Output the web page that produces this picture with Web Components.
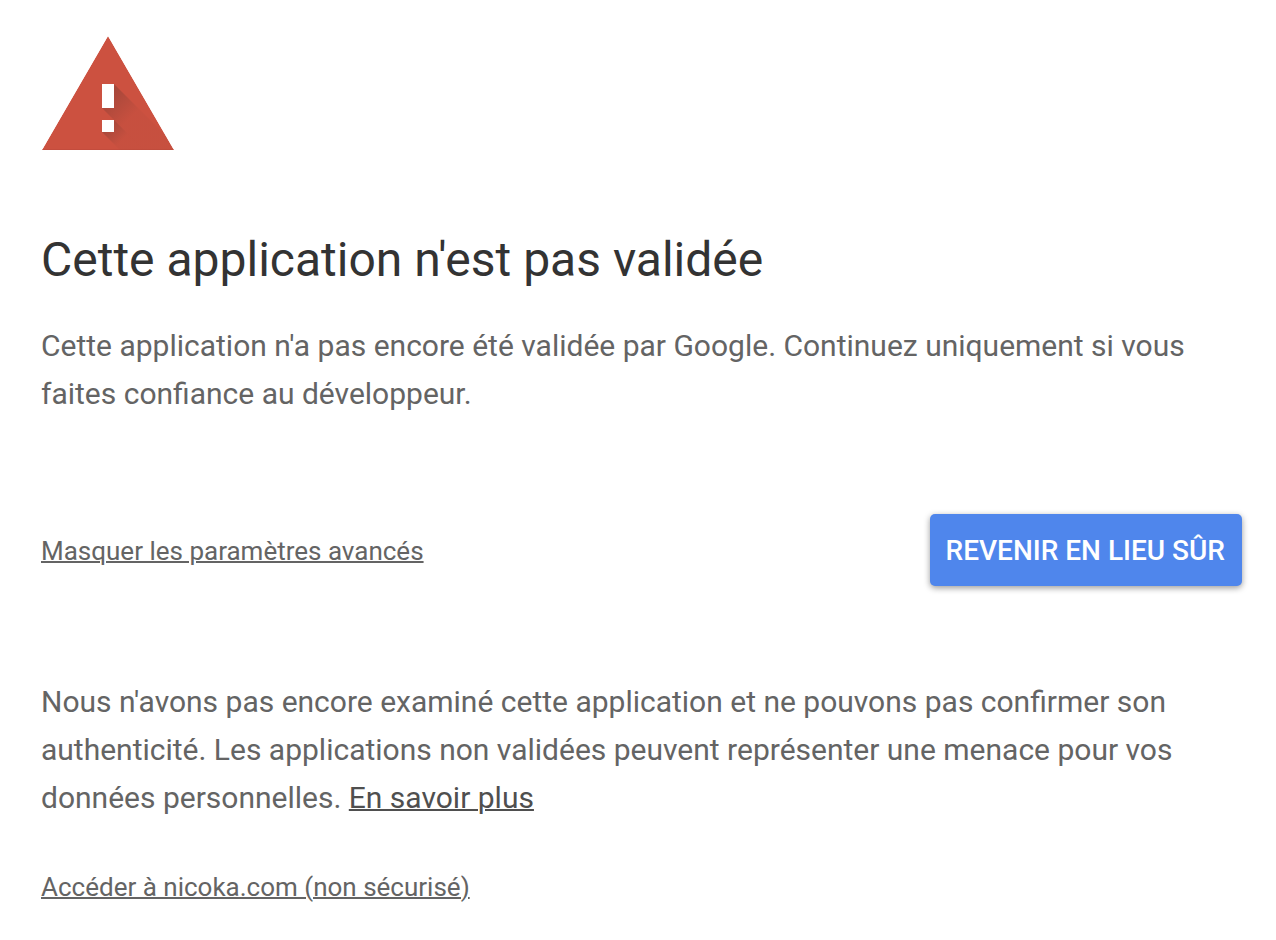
<!DOCTYPE html>
<html lang="fr">
<head>
<meta charset="utf-8">
<meta name="viewport" content="width=device-width, initial-scale=1">
<title>Cette application n'est pas validée</title>
<style>
    body {
        margin: 0;
        background: #fff;
        font-family: Roboto, "Liberation Sans", sans-serif;
    }

    p a {
        color: #4f4f4f;
        text-decoration: underline 2px;
    }
</style>
</head>
<body>
<uc-interstitial>
    <uc-warning-icon slot="icon"></uc-warning-icon>
    <h1 slot="title">Cette application n'est pas validée</h1>
    <p slot="main">Cette application n'a pas encore été validée par Google. Continuez uniquement si vous faites confiance au développeur.</p>
    <uc-link slot="actions" href="#details">Masquer les paramètres avancés</uc-link>
    <uc-button slot="actions">REVENIR EN LIEU SÛR</uc-button>
    <p slot="details">Nous n'avons pas encore examiné cette application et ne pouvons pas confirmer son authenticité. Les applications non validées peuvent représenter une menace pour vos données personnelles. <a href="#more">En savoir plus</a></p>
    <uc-link slot="details" href="#proceed">Accéder à nicoka.com (non sécurisé)</uc-link>
</uc-interstitial>

<script>
class WarningIcon extends HTMLElement {

    constructor() {
        super();
        this.attachShadow({mode: 'open'});

        this.shadowRoot.innerHTML = `
            <style>
                :host {
                    display: block;
                    width: 133px;
                }

                svg {
                    display: block;
                    width: 100%;
                }
            </style>

            <svg viewBox="-1 0 133 114" aria-hidden="true">
                <defs>
                    <linearGradient id="bar-shade" gradientUnits="userSpaceOnUse" x1="66" y1="60" x2="88" y2="82">
                        <stop offset="0" stop-color="#262626" stop-opacity="0.22"/>
                        <stop offset="1" stop-color="#262626" stop-opacity="0.03"/>
                    </linearGradient>
                    <linearGradient id="dot-shade" gradientUnits="userSpaceOnUse" x1="66" y1="90" x2="80" y2="104">
                        <stop offset="0" stop-color="#262626" stop-opacity="0.22"/>
                        <stop offset="1" stop-color="#262626" stop-opacity="0.03"/>
                    </linearGradient>
                    <clipPath id="triangle"><path d="M66 0 132 114H0z"/></clipPath>
                </defs>
                <g clip-path="url(#triangle)">
                    <path fill="#cc5140" d="M66 0 132 114H0z"/>
                    <path fill="url(#bar-shade)" d="M72 48 138 114H102L72 84 60 72z"/>
                    <path fill="url(#dot-shade)" d="M72 84 102 114H78L60 96z"/>
                    <path fill="#b94839" fill-opacity="0.5" d="M0 113h132v1H0z"/>
                </g>
                <path fill="#fff" d="M60 48h12v24H60zM60 84h12v12H60z"/>
            </svg>
        `;
    }
}

class Link extends HTMLElement {

    constructor() {
        super();
        this.attachShadow({mode: 'open'});

        this.shadowRoot.innerHTML = `
            <style>
                :host {
                    display: block;
                    padding-top: 2px;
                    font-size: 26px;
                    line-height: 40px;
                }

                a {
                    color: inherit;
                    text-decoration: underline 2px;
                }
            </style>

            <a><slot></slot></a>
        `;
    }

    static get observedAttributes() {
        return ['href'];
    }

    attributeChangedCallback(name, oldValue, newValue) {
        this.shadowRoot.querySelector('a').setAttribute('href', newValue);
    }
}

class Button extends HTMLElement {

    constructor() {
        super();
        this.attachShadow({mode: 'open'});

        this.shadowRoot.innerHTML = `
            <style>
                :host {
                    display: block;
                }

                button {
                    display: block;
                    padding: 17px 17px 15px 16px;
                    border: 0;
                    border-radius: 5px;
                    background: #4f86ec;
                    box-shadow: 0 2px 6px rgba(0, 0, 0, 0.4);
                    color: #fff;
                    font: 500 28px/40px Roboto, "Liberation Sans", sans-serif;
                    white-space: nowrap;
                    cursor: pointer;
                }
            </style>

            <button type="button"><slot></slot></button>
        `;
    }
}

class Interstitial extends HTMLElement {

    constructor() {
        super();
        this.attachShadow({mode: 'open'});

        this.shadowRoot.innerHTML = `
            <style>
                :host {
                    display: block;
                    padding: 36px 34px 32px 41px;
                    color: #646464;
                    font-size: 30px;
                    line-height: 48px;
                }

                ::slotted(h1) {
                    margin: 80px 0 32px;
                    color: #333;
                    font-size: 48px;
                    font-weight: 400;
                    line-height: 60px;
                }

                ::slotted(p) {
                    margin: 0;
                }

                #actions {
                    display: flex;
                    align-items: center;
                    justify-content: space-between;
                    margin: 96px 0 92px;
                }

                #details {
                    display: flex;
                    flex-direction: column;
                    align-items: flex-start;
                    gap: 43px;
                }
            </style>

            <slot name="icon"></slot>
            <slot name="title"></slot>
            <slot name="main"></slot>
            <div id="actions">
                <slot name="actions"></slot>
            </div>
            <section id="details">
                <slot name="details"></slot>
            </section>
        `;
    }
}

customElements.define('uc-warning-icon', WarningIcon);
customElements.define('uc-link', Link);
customElements.define('uc-button', Button);
customElements.define('uc-interstitial', Interstitial);
</script>
</body>
</html>
